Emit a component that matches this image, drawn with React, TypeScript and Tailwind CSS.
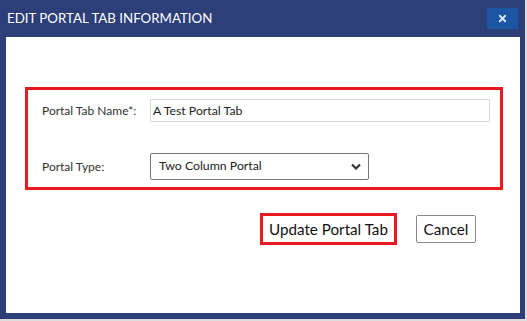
import { X } from "lucide-react";

const font = { fontFamily: '"Segoe UI", Lato, "Open Sans", sans-serif' };

export default function App() {
  return (
    <div className="w-[527px] h-[321px] bg-[#dcdcdc] overflow-hidden" style={font}>
      <div className="w-[525px] h-[319px] bg-[#2c3f79] flex flex-col">
        <div className="h-[37px] flex items-start justify-between pl-[7px] pr-[7px]">
          <h1 className="text-[13.3px] text-white mt-[9px] whitespace-nowrap">EDIT PORTAL TAB INFORMATION</h1>
          <button className="mt-[8px] w-[31px] h-[21px] bg-[#1b55a4] flex items-center justify-center">
            <X className="w-[11px] h-[11px] text-[#dbe9ff]" strokeWidth={4} />
          </button>
        </div>
        <div className="flex-1 bg-white ml-[6px] mr-[5px] mb-[6px] flex flex-col">
          <div className="mt-[50px] ml-[19px] mr-[17px] border-[3px] border-[#e8191f] pl-[14px] pt-[9px] pb-[7px] flex flex-col gap-[31px]">
            <div className="flex items-center">
              <label className="w-[108px] text-[12px] text-[#333] whitespace-nowrap pt-[1px]">Portal Tab Name*:</label>
              <input
                defaultValue="A Test Portal Tab"
                className="w-[340px] h-[23px] border border-[#d9d9d9] px-[2px] text-[12.3px] text-[#222] outline-none"
              />
            </div>
            <div className="flex items-center">
              <label className="w-[108px] text-[12px] text-[#333] whitespace-nowrap pt-[1px]">Portal Type:</label>
              <div className="w-[219px] h-[27px] border border-[#767676] rounded-[2px] flex items-center justify-between pl-[8px] pr-[7px]">
                <span className="text-[12.3px] text-[#222]">Two Column Portal</span>
                <svg width="10" height="7" viewBox="0 0 10 7">
                  <path d="M1 1.5 L5 5.5 L9 1.5" fill="none" stroke="#333" strokeWidth="2.2" />
                </svg>
              </div>
            </div>
          </div>
          <div className="mt-[23px] flex justify-end items-center gap-[19px] pr-[44px]">
            <button className="w-[137px] h-[32px] border-[3px] border-[#e8191f] bg-white text-[15.2px] text-[#111] flex items-center justify-center whitespace-nowrap">
              Update Portal Tab
            </button>
            <button className="w-[60px] h-[28px] border border-[#8a8a8a] rounded-[2px] bg-white text-[15.2px] text-[#111] flex items-center justify-center">
              Cancel
            </button>
          </div>
        </div>
      </div>
    </div>
  );
}
